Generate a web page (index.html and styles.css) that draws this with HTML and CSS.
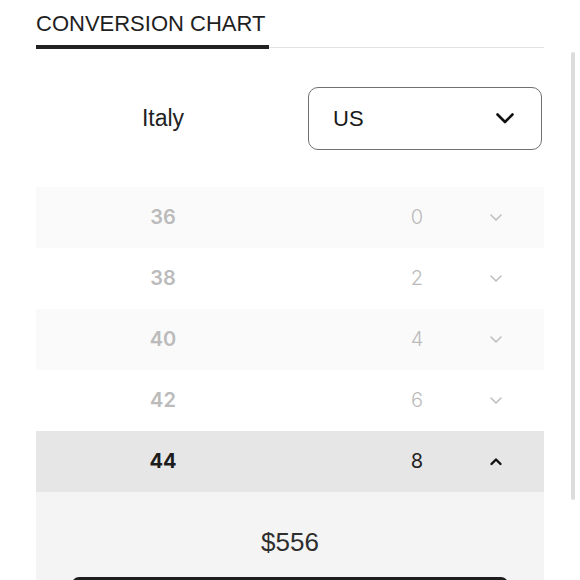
FILE: index.html
```html
<!DOCTYPE html>
<html>
<head>
<meta charset="utf-8">
<link rel="stylesheet" href="styles.css">
</head>
<body>
<div class="page">
  <div class="tabs">
    <div class="tab active">CONVERSION CHART</div>
    <div class="tab-fill"></div>
  </div>
  <div class="filter">
    <div class="from">Italy</div>
    <div class="select">
      <span>US</span>
      <svg class="sel-chev" width="18" height="11" viewBox="0 0 18 11"><path d="M1.5 1.5 L9 9 L16.5 1.5" fill="none" stroke="#111" stroke-width="2.6" stroke-linecap="round" stroke-linejoin="round"/></svg>
    </div>
  </div>
  <div class="rows">
    <div class="row shade"><div class="it">36</div><div class="us">0</div><svg class="chev" width="14" height="9" viewBox="0 0 14 9"><path d="M2 2 L7 7 L12 2" fill="none" stroke="#bdbdbd" stroke-width="1.5" stroke-linecap="round" stroke-linejoin="round"/></svg></div>
    <div class="row"><div class="it">38</div><div class="us">2</div><svg class="chev" width="14" height="9" viewBox="0 0 14 9"><path d="M2 2 L7 7 L12 2" fill="none" stroke="#bdbdbd" stroke-width="1.5" stroke-linecap="round" stroke-linejoin="round"/></svg></div>
    <div class="row shade"><div class="it">40</div><div class="us">4</div><svg class="chev" width="14" height="9" viewBox="0 0 14 9"><path d="M2 2 L7 7 L12 2" fill="none" stroke="#bdbdbd" stroke-width="1.5" stroke-linecap="round" stroke-linejoin="round"/></svg></div>
    <div class="row"><div class="it">42</div><div class="us">6</div><svg class="chev" width="14" height="9" viewBox="0 0 14 9"><path d="M2 2 L7 7 L12 2" fill="none" stroke="#bdbdbd" stroke-width="1.5" stroke-linecap="round" stroke-linejoin="round"/></svg></div>
    <div class="row selected"><div class="it">44</div><div class="us">8</div><svg class="chev" width="14" height="9" viewBox="0 0 14 9"><path d="M2.5 7 L7 2.5 L11.5 7" fill="none" stroke="#111" stroke-width="2.4" stroke-linecap="round" stroke-linejoin="round"/></svg></div>
    <div class="panel">
      <div class="price">$556</div>
      <div class="btn"></div>
    </div>
  </div>
</div>
<div class="scrollbar"></div>
</body>
</html>
```
FILE: styles.css
```css
html, body {
  margin: 0;
  padding: 0;
  background: #fff;
  overflow: hidden;
}
body {
  font-family: "Liberation Sans", Arial, sans-serif;
  color: #222;
  width: 580px;
  height: 580px;
  position: relative;
}
.page {
  padding: 0 36px;
}
.tabs {
  display: flex;
  align-items: flex-end;
}
.tab {
  font-size: 22px;
  line-height: 26px;
  padding: 11px 0 8px;
  color: #1f1f1f;
  white-space: nowrap;
}
.tab.active {
  border-bottom: 4px solid #222;
  width: 233px;
}
.tab-fill {
  flex: 1;
  border-bottom: 1px solid #e2e2e2;
  margin-bottom: 1px;
}
.filter {
  display: grid;
  grid-template-columns: 254px 1fr;
  align-items: center;
  margin-top: 38px;
}
.from {
  text-align: center;
  font-size: 23px;
  color: #222;
}
.select {
  margin-left: 18px;
  margin-right: 2px;
  height: 63px;
  box-sizing: border-box;
  border: 1.5px solid #707070;
  border-radius: 10px;
  display: flex;
  align-items: center;
  justify-content: space-between;
  padding: 0 27px 0 24px;
  font-size: 22px;
  color: #1a1a1a;
}
.sel-chev {
  display: block;
}
.rows {
  margin-top: 37px;
}
.row {
  display: grid;
  grid-template-columns: 254px 254px;
  height: 61px;
  align-items: center;
}
.row.shade {
  background: #fafafa;
}
.row.selected {
  background: #e6e6e6;
}
.it {
  grid-column: 1;
  grid-row: 1;
  text-align: center;
  font-family: "Inter", sans-serif;
  font-weight: 600;
  font-size: 20px;
  color: #bbbbbb;
  margin-top: -2px;
}
.us {
  grid-column: 2;
  grid-row: 1;
  text-align: center;
  font-family: "Inter", sans-serif;
  font-weight: 300;
  font-size: 20px;
  color: #bbbbbb;
  margin-top: -2px;
}
.chev {
  grid-column: 2;
  grid-row: 1;
  justify-self: end;
  margin-right: 41px;
  display: block;
}
.row.selected .it {
  color: #1c1c1c;
  font-weight: 700;
}
.row.selected .us {
  color: #222;
  font-weight: 400;
}
.panel {
  background: #f4f4f4;
  padding: 35px 36px 20px;
}
.price {
  text-align: center;
  font-size: 26px;
  line-height: 30px;
  color: #2e2e2e;
}
.btn {
  margin-top: 20px;
  height: 52px;
  background: #1e1e1e;
  border-radius: 7px;
}
.scrollbar {
  position: absolute;
  left: 571px;
  top: 52px;
  width: 4px;
  height: 448px;
  background: #dcdcdc;
  border-radius: 2px;
}
```
